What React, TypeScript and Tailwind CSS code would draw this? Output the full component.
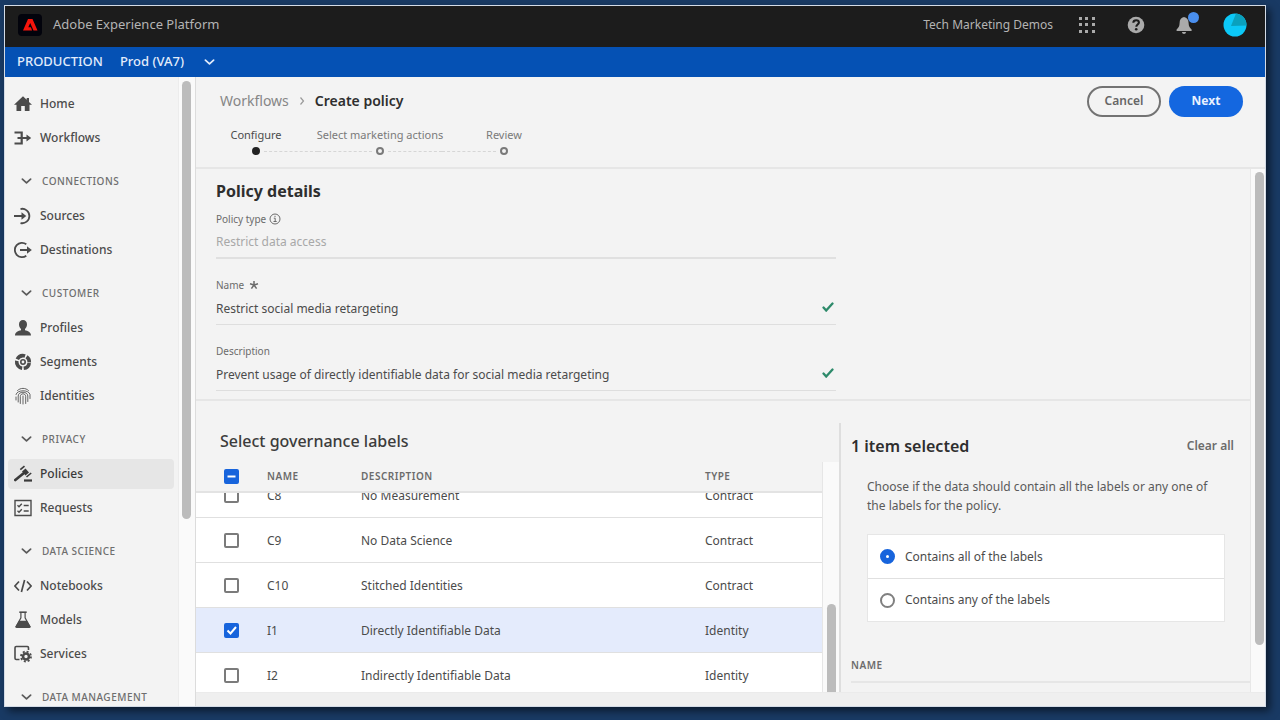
import { useLayoutEffect, useRef, useState } from "react"
import type { ReactNode } from "react"

type Item = { name: string; icon: ReactNode }
type Group = { title?: string; items: Item[] }

function Icon({ children }: { children: ReactNode }) {
  return (
    <svg viewBox="0 0 18 18" className="size-[18px] shrink-0" fill="none" stroke="currentColor" strokeWidth="1.8" aria-hidden="true">
      {children}
    </svg>
  )
}

const GROUPS: Group[] = [
  {
    items: [
      { name: "Home", icon: <Icon><path d="M9 1.2 0 9.8h2.500V16h4.700v-5h3.600v5h4.700V9.800H18L15 6.900V3h-2.300v1.700z" fill="currentColor" stroke="none" /></Icon> },
      { name: "Workflows", icon: <Icon><path d="M0.5 3.5h7.200v11H0.500M3.500 9h9.500" strokeWidth="2.200" /><path d="M12.500 5.600 17.200 9l-4.700 3.400z" fill="currentColor" stroke="none" /></Icon> },
    ],
  },
  {
    title: "CONNECTIONS",
    items: [
      { name: "Sources", icon: <Icon><path d="M6.500 2a7.200 7.200 0 1 1 0 14M0 9h8.500" /><path d="M7.500 5.300 12.300 9l-4.800 3.700z" fill="currentColor" stroke="none" /></Icon> },
      { name: "Destinations", icon: <Icon><path d="M12.300 3.200a7.200 7.200 0 1 0 0 11.600M6 9h8" /><path d="M13 5.300 17.800 9 13 12.700z" fill="currentColor" stroke="none" /></Icon> },
    ],
  },
  {
    title: "CUSTOMER",
    items: [
      { name: "Profiles", icon: <Icon><path d="M9 1C6.600 1 5 2.700 5 5.300c0 2 .8 3.600 2 4.600v1.300C4.500 11.800 1 13 1 16.500h16c0-3.500-3.500-4.700-6-5.300V9.900c1.200-1 2-2.600 2-4.600C13 2.700 11.400 1 9 1z" fill="currentColor" stroke="none" /></Icon> },
      {
        name: "Segments",
        icon: (
          <Icon>
            <circle cx="9" cy="9" r="6.300" strokeWidth="3.600" strokeDasharray="8 1.600 10 1.600 9 1.600 6.200 1.580" transform="rotate(8 9 9)" />
            <circle cx="9" cy="9" r="2.200" strokeWidth="1.600" />
          </Icon>
        ),
      },
      {
        name: "Identities",
        icon: (
          <Icon>
            <g strokeWidth="1" strokeLinecap="round" opacity="0.850">
              <path d="M3.500 3.500C6.500.6 11.500.6 14.500 3.500M2 7.500c1-5 13-5 14 0v4M2 10v3M4.200 15V9c0-5 9.600-5 9.600 0v5.500M6.300 16.500V9.500c0-3.600 5.400-3.600 5.400 0V16.500M9 9v8" />
            </g>
          </Icon>
        ),
      },
    ],
  },
  {
    title: "PRIVACY",
    items: [
      {
        name: "Policies",
        icon: (
          <Icon>
            <path d="m1.300 15 8-6.500" strokeWidth="2.700" strokeLinecap="round" />
            <path d="m8 6.500 3.500-3 3.500 4-3.500 3z" fill="currentColor" stroke="none" />
            <path d="m6.300 4.700 4.200-3.600M12.500 12l4.700-4" strokeWidth="1.600" />
            <path d="M10 15.500h8" strokeWidth="2.200" />
          </Icon>
        ),
      },
      { name: "Requests", icon: <Icon><path d="M1 1.500h16v15H1z" strokeWidth="1.400" /><path d="m3.500 6.300 1.500 1.400 2.800-3M3.500 11.800 5 13.200l2.800-3M9.700 6.500h5M9.700 12h5" strokeWidth="1.400" /></Icon> },
    ],
  },
  {
    title: "DATA SCIENCE",
    items: [
      { name: "Notebooks", icon: <Icon><path d="M5 4.500.9 9 5 13.500M13 4.500 17.100 9 13 13.500M10.600 3 7.400 15" strokeWidth="1.700" /></Icon> },
      { name: "Models", icon: <Icon><path d="M5.300 1.200h7.400" strokeWidth="1.600" /><path d="M6.900 1.500v5.300L2.300 15.500h13.400L11.100 6.800V1.500" strokeWidth="1.200" /><path d="M5 9.800h8l3.500 5.500c.5 1-.1 1.700-1 1.700h-13c-.9 0-1.500-.7-1-1.700z" fill="currentColor" stroke="none" /></Icon> },
      { name: "Services", icon: <Icon><path d="M5.500 14.500h-3.300c-.7 0-1.200-.5-1.200-1.200V2.700c0-.7.500-1.200 1.200-1.200h11.100c.7 0 1.200.5 1.200 1.200V5" strokeWidth="1.600" /><circle cx="12" cy="11.500" r="3" strokeWidth="2.600" /><circle cx="12" cy="11.500" r="5" strokeWidth="1.800" strokeDasharray="2 1.927" /></Icon> },
    ],
  },
  { title: "DATA MANAGEMENT", items: [] },
]

const LABELS = [
  { id: "C8", description: "No Measurement", type: "Contract" },
  { id: "C9", description: "No Data Science", type: "Contract" },
  { id: "C10", description: "Stitched Identities", type: "Contract" },
  { id: "I1", description: "Directly Identifiable Data", type: "Identity" },
  { id: "I2", description: "Indirectly Identifiable Data", type: "Identity" },
]

const STEPS = ["Configure", "Select marketing actions", "Review"]

function Chevron({ className }: { className: string }) {
  return (
    <svg viewBox="0 0 12 8" className={className} fill="none" stroke="currentColor" strokeWidth="1.900" strokeLinecap="round" strokeLinejoin="round" aria-hidden="true">
      <path d="m1.500 2 4.500 4 4.500-4" />
    </svg>
  )
}

function Check() {
  return (
    <svg viewBox="0 0 12 10" className="mb-1 h-[10px] w-3 shrink-0 text-[#2d8a6a]" fill="none" stroke="currentColor" strokeWidth="2.300" strokeLinecap="round" aria-hidden="true">
      <path d="m1.500 5.500 2.700 3 6.300-7" />
    </svg>
  )
}

function Checkbox({ label, checked, mixed, onChange }: { label: string; checked: boolean; mixed?: boolean; onChange: () => void }) {
  return (
    <span className="relative block size-[15px]">
      <input
        type="checkbox"
        aria-label={label}
        checked={checked}
        onChange={onChange}
        className="block size-[15px] appearance-none rounded-xs border-2 border-[#7b7b7b] bg-white checked:border-[#1764dc] checked:bg-[#1764dc]"
      />
      {checked && (
        <svg viewBox="0 0 15 15" className="pointer-events-none absolute inset-0 size-[15px]" fill="none" stroke="#fff" strokeWidth="2" aria-hidden="true">
          <path d={mixed ? "M3.500 7.500h8" : "m3.500 7.500 3 3 5.500-6.500"} />
        </svg>
      )}
    </span>
  )
}

function Field({ id, label, extra, defaultValue, disabled }: { id: string; label: string; extra?: ReactNode; defaultValue: string; disabled?: boolean }) {
  return (
    <div className="mb-[18px] max-w-[620px]">
      <label htmlFor={id} className="flex h-4 items-center text-[10px] text-[#6b6b6b]">
        {label}
        {extra}
      </label>
      <div className={`flex h-8 items-center pr-0.5 ${disabled ? "border-b-2 border-[#e0e0e0]" : "border-b border-[#dedede]"}`}>
        <input
          id={id}
          defaultValue={defaultValue}
          disabled={disabled}
          className="min-w-0 flex-1 bg-transparent text-xs text-[#4b4b4b] outline-none disabled:text-[#a8a8a8]"
        />
        {!disabled && <Check />}
      </div>
    </div>
  )
}

function Sidebar() {
  return (
    <div className="flex w-[191px] shrink-0 border-r border-[#dcdcdc]">
      <nav className="min-w-0 flex-1 overflow-hidden border-r border-[#ececec] pt-2.5">
        {GROUPS.map((group, i) => (
          <div key={i}>
            {group.title && (
              <button className="flex h-11 w-full items-center gap-2.5 pt-2 pl-4 text-[10px] font-medium tracking-wider text-[#6e6e6e]">
                <Chevron className="h-[8px] w-[11px] text-[#5b5b5b]" />
                {group.title}
              </button>
            )}
            {group.items.map(item => (
              <div key={item.name} className="py-0.5 pr-1 pl-[3px]">
                <a
                  href="#"
                  className={`flex h-[30px] items-center gap-2 rounded pl-1.5 text-xs font-medium ${
                    item.name === "Policies" ? "bg-[#e6e6e6] text-[#3a3a3a]" : "text-[#4b4b4b]"
                  }`}
                >
                  {item.icon}
                  {item.name}
                </a>
              </div>
            ))}
          </div>
        ))}
      </nav>
      <div className="w-4 shrink-0 bg-[#fafafa] pt-1 pl-[3px]">
        <div className="h-[70%] w-[9px] rounded-full bg-[#bcbcbc]" />
      </div>
    </div>
  )
}

export default function App() {
  const [selected, setSelected] = useState<string[]>(["I1"])
  const [match, setMatch] = useState("all")
  const tableRef = useRef<HTMLDivElement>(null)

  useLayoutEffect(() => {
    if (tableRef.current) tableRef.current.scrollTop = 20
  }, [])

  function toggle(id: string) {
    setSelected(prev => (prev.includes(id) ? prev.filter(l => l !== id) : [...prev, id]))
  }

  return (
    <div className="h-screen bg-[#193a64] pt-[5px] pr-[14px] pb-[13px] pl-1 font-['Noto_Sans',sans-serif] text-[#4b4b4b]">
      <div className="flex h-full flex-col overflow-hidden border border-[#d3dbe6] bg-[#f3f3f3] shadow-[4px_4px_8px_rgba(0,0,0,0.55)]">
        <header className="flex h-[41px] shrink-0 items-center bg-[#1c1c1c] pr-[18px] pb-1 pl-[13px] text-[#b4b4b4]">
          <svg viewBox="0 0 24 22" className="h-[22px] w-6" aria-hidden="true">
            <rect width="24" height="22" rx="4" fill="#02030c" />
            <path d="M5 16.500 10 5h4.500l5 11.500h-4L12.200 9 10.300 13.200h2.600l1.200 3.300z" fill="#f5150c" />
          </svg>
          <span className="ml-[11px] text-[13px]">Adobe Experience Platform</span>
          <div className="ml-auto flex items-center gap-[30px]">
            <span className="-mr-1 text-xs">Tech Marketing Demos</span>
            <button aria-label="Apps">
              <svg viewBox="0 0 18 18" className="size-[18px]" fill="#aaa" aria-hidden="true">
                {[0, 6, 13].map(y => [0, 6, 13].map(x => <rect key={`${x}-${y}`} x={x} y={y + 1} width="3" height="3" />))}
              </svg>
            </button>
            <button aria-label="Help">
              <svg viewBox="0 0 18 18" className="size-[18px]" aria-hidden="true">
                <circle cx="9" cy="9" r="8.300" fill="#aaa" />
                <path d="M6.300 6.700c.2-3.400 5.600-3.200 5.600-.2 0 2-2.600 2.100-2.600 4.200" fill="none" stroke="#1c1c1c" strokeWidth="2.100" />
                <circle cx="9.200" cy="13.300" r="1.300" fill="#1c1c1c" />
              </svg>
            </button>
            <button aria-label="Notifications" className="relative">
              <svg viewBox="0 0 18 18" className="size-[18px]" fill="#aaa" aria-hidden="true">
                <path d="M9 1C6 1.600 4.600 3.800 4.600 7c0 3.700-1.400 5-3 6.500V15h15v-1.500c-1.600-1.500-3-2.800-3-6.500C13.600 3.800 12 1.600 9 1zM7 16h4c0 2.500-4 2.500-4 0z" />
              </svg>
              <span className="absolute -top-1 left-[13px] size-[11px] rounded-full bg-[#4a8fee]" />
            </button>
            <button aria-label="Account">
              <svg viewBox="0 0 24 24" className="size-6" aria-hidden="true">
                <circle cx="12" cy="12" r="11.500" fill="#0cc8f7" />
                <path d="M13 0.500A11.500 11.500 0 0 1 23.500 12.500L8 13z" fill="#0aa0bd" />
              </svg>
            </button>
          </div>
        </header>

        <div className="flex h-[30px] shrink-0 items-center bg-[#0551b4] pl-3 text-[13px] text-[#e2ecfb]">
          <span className="font-medium">PRODUCTION</span>
          <button className="ml-[17px] flex items-center gap-5 font-medium">
            Prod (VA7)
            <Chevron className="h-[8px] w-[11px]" />
          </button>
        </div>

        <div className="flex min-h-0 flex-1">
          <Sidebar />

          <main className="flex min-w-0 flex-1 flex-col">
            <div className="h-[92px] shrink-0 border-b-2 border-[#e6e6e6]">
              <div className="flex h-12 items-center pr-[22px] pl-6 text-sm">
                <a href="#" className="text-[#868686]">Workflows</a>
                <svg viewBox="0 0 6 8" className="mx-[10px] h-2 w-1.5" fill="none" stroke="#999" strokeWidth="1.200" aria-hidden="true">
                  <path d="m1.500 0.500 3 3.500-3 3.500" />
                </svg>
                <h1 className="font-semibold text-[#2e2e2e]">Create policy</h1>
                <button className="ml-auto h-[31px] w-[74px] rounded-full border-2 border-[#737373] text-xs font-semibold text-[#666]">Cancel</button>
                <button className="ml-2 h-[31px] w-[74px] rounded-full bg-[#1467e0] text-xs font-bold text-[#e8f1ff]">Next</button>
              </div>
              <ol className="flex gap-1">
                {STEPS.map((step, i) => (
                  <li key={step} className="flex w-[120px] flex-col items-center gap-0.5 text-[11px] leading-5">
                    <span className={`whitespace-nowrap ${i === 0 ? "text-[#4b4b4b]" : "text-[#7a7a7a]"}`}>{step}</span>
                    <span className="flex w-[124px] items-center justify-between gap-1">
                      <span className={`flex-1 border-t border-dashed ${i === 0 ? "border-transparent" : "border-[#d6d6d6]"}`} />
                      <span className={`size-2 rounded-full border-2 ${i === 0 ? "border-[#222] bg-[#222]" : "border-[#7a7a7a]"}`} />
                      <span className={`flex-1 border-t border-dashed ${i === 2 ? "border-transparent" : "border-[#d6d6d6]"}`} />
                    </span>
                  </li>
                ))}
              </ol>
            </div>

            <div className="flex min-h-0 flex-1">
              <div className="flex min-w-0 flex-1 flex-col overflow-hidden border-r border-[#e8e8e8]">
                <section className="h-[232px] shrink-0 border-b-2 border-[#e6e6e6] pt-2 pl-5">
                  <h2 className="mb-1.5 text-base leading-7 font-bold text-[#2e2e2e]">Policy details</h2>
                  <Field
                    id="type"
                    label="Policy type"
                    defaultValue="Restrict data access"
                    disabled
                    extra={
                      <svg viewBox="0 0 12 12" className="ml-[3px] size-3" fill="none" stroke="currentColor" aria-hidden="true">
                        <circle cx="6" cy="6" r="5" />
                        <path d="M4.800 5.200h1.400v3.300M4.500 8.500h3.200M6 2.800v1.300" />
                      </svg>
                    }
                  />
                  <Field
                    id="name"
                    label="Name"
                    defaultValue="Restrict social media retargeting"
                    extra={
                      <svg viewBox="0 0 10 10" className="ml-[5px] size-2.5" stroke="currentColor" strokeWidth="1.500" aria-hidden="true">
                        <path d="M5 5V1M5 5l4-1.200M5 5l2.600 3.600M5 5 2.400 8.600M5 5 1 3.800" />
                      </svg>
                    }
                  />
                  <Field id="description" label="Description" defaultValue="Prevent usage of directly identifiable data for social media retargeting" />
                </section>

                <div className="flex min-h-0 flex-1">
                  <section className="flex min-w-0 flex-[643] flex-col">
                    <h2 className="flex h-[61px] shrink-0 items-end pb-[9px] pl-6 text-base font-medium text-[#3c3c3c]">Select governance labels</h2>
                    <div className="flex min-h-0 flex-1">
                      <div ref={tableRef} className="min-w-0 flex-1 overflow-y-auto border-r border-[#e6e6e6] [scrollbar-width:none]">
                        <table className="w-full table-fixed border-separate border-spacing-0 text-left text-xs">
                          <thead className="sticky top-0 z-10 bg-[#f3f3f3]">
                            <tr className="h-[31px] text-[10px] tracking-wider text-[#6b6b6b]">
                              <th className="w-[71px] border-b-2 border-[#e3e3e3] pl-7">
                                <Checkbox label="Select all labels" checked={selected.length > 0} mixed={selected.length < LABELS.length} onChange={() => setSelected([])} />
                              </th>
                              <th className="w-[94px] border-b-2 border-[#e3e3e3] font-semibold">NAME</th>
                              <th className="border-b-2 border-[#e3e3e3] font-semibold">DESCRIPTION</th>
                              <th className="w-[117px] border-b-2 border-[#e3e3e3] font-semibold">TYPE</th>
                            </tr>
                          </thead>
                          <tbody>
                            {LABELS.map(label => {
                              const isSelected = selected.includes(label.id)
                              return (
                                <tr key={label.id} className={`h-[45px] ${isSelected ? "bg-[#e4ebfc]" : "bg-white"}`}>
                                  <td className="border-b border-[#e0e0e0] pl-7">
                                    <Checkbox label={`Select ${label.id}`} checked={isSelected} onChange={() => toggle(label.id)} />
                                  </td>
                                  <td className="border-b border-[#e0e0e0] pt-0.5">{label.id}</td>
                                  <td className="border-b border-[#e0e0e0] pt-0.5">{label.description}</td>
                                  <td className="border-b border-[#e0e0e0] pt-0.5">{label.type}</td>
                                </tr>
                              )
                            })}
                          </tbody>
                        </table>
                      </div>
                      <div className="flex w-4 shrink-0 flex-col justify-end bg-[#fafafa] pl-1">
                        <div className="h-[88px] w-[9px] rounded-t-full bg-[#bcbcbc]" />
                      </div>
                    </div>
                  </section>

                  <section className="mt-[22px] min-w-0 flex-[399] border-l-2 border-[#dedede] pl-2.5">
                    <div className="flex h-[46px] items-center justify-between pr-4">
                      <h2 className="text-base font-semibold text-[#2e2e2e]">1 item selected</h2>
                      <button className="text-xs font-semibold text-[#6b6b6b]">Clear all</button>
                    </div>
                    <p className="mt-2 pr-7 pl-4 text-xs leading-[19px] text-[#5a5a5a]">
                      Choose if the data should contain all the labels or any one of the labels for the policy.
                    </p>
                    <fieldset className="mt-[19px] mr-[25px] ml-4 border border-[#e6e6e6] bg-white">
                      {["all", "any"].map(value => (
                        <label key={value} className={`flex h-[43px] items-center gap-2.5 pl-3 text-xs ${value === "any" ? "border-t border-[#e0e0e0]" : ""}`}>
                          <input
                            type="radio"
                            name="match"
                            value={value}
                            checked={match === value}
                            onChange={() => setMatch(value)}
                            className="size-[15px] appearance-none rounded-full border-2 border-[#808080] checked:border-[6px] checked:border-[#1764dc]"
                          />
                          {value === "all" ? "Contains all of the labels" : "Contains any of the labels"}
                        </label>
                      ))}
                    </fieldset>
                    <h3 className="mt-[35px] border-b-2 border-[#e6e6e6] pb-2 text-[10px] leading-4 font-semibold tracking-wider text-[#6b6b6b]">NAME</h3>
                  </section>
                </div>
              </div>
              <div className="w-3.5 shrink-0 bg-[#fafafa] pt-[3px] pl-1">
                <div className="h-[91%] w-[9px] rounded-full bg-[#bcbcbc]" />
              </div>
            </div>
            <div className="h-3.5 shrink-0 border-t border-[#ebebeb] bg-[#efefef]" />
          </main>
        </div>
      </div>
    </div>
  )
}
